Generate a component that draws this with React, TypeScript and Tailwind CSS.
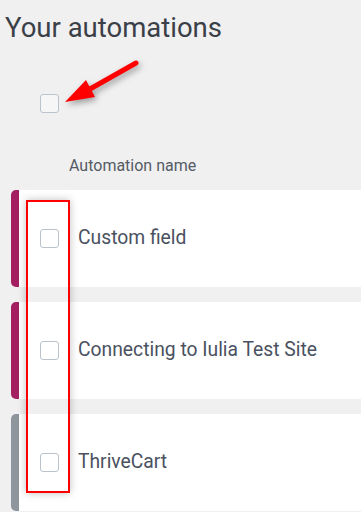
import React, { FC } from "react";

type Automation = {
  id: number;
  name: string;
  color: string;
};

const AUTOMATIONS: Automation[] = [
  { id: 1, name: "Custom field", color: "bg-[#a31f62]" },
  { id: 2, name: "Connecting to Iulia Test Site", color: "bg-[#a31f62]" },
  { id: 3, name: "ThriveCart", color: "bg-[#8f959d]" },
];

const Checkbox: FC = () => (
  <span className="block w-[19px] h-[19px] rounded-[3px] border border-[#bcc3cc] bg-white/40" />
);

const App: FC = () => {
  return (
    <div
      className="relative w-[361px] h-[512px] overflow-hidden bg-[#f0f0f0]"
      style={{ fontFamily: "Roboto, 'Noto Sans', sans-serif" }}
    >
      <h1 className="pl-[5px] pt-[11px] text-[27.5px] leading-[34px] text-[#3b3f47]">
        Your automations
      </h1>

      {/* 全選択 */}
      <div className="pl-[40px] pt-[49px]">
        <Checkbox />
      </div>
      <div className="pl-[69px] pt-[43px] text-[16px] leading-[19px] text-[#555b66]">
        Automation name
      </div>

      <div className="flex flex-col gap-[15px] pl-[11px] pt-[15px]">
        {AUTOMATIONS.map((a) => (
          <div key={a.id} className="flex h-[97px]">
            <div className={`w-[8px] rounded-l-[5px] ${a.color}`} />
            <div className="flex flex-1 items-center bg-white pl-[21px]">
              <Checkbox />
              <span className="pl-[19px] text-[19.3px] text-[#4a5160]">{a.name}</span>
            </div>
          </div>
        ))}
      </div>

      {/* 注釈 */}
      <div className="absolute left-[26px] top-[200px] w-[44px] h-[293px] border-2 border-[#ff0000] shadow-[0_0_8px_rgba(0,0,0,0.25)]" />
      <svg
        className="absolute left-0 top-0"
        width="361"
        height="512"
        style={{ filter: "drop-shadow(2px 3px 3px rgba(0,0,0,0.35))" }}
      >
        <line x1="136" y1="63" x2="90" y2="89" stroke="#ff0000" strokeWidth="5" strokeLinecap="round" />
        <polygon points="65,102 86,80 95,97" fill="#ff0000" />
      </svg>
    </div>
  );
};

export default App;
